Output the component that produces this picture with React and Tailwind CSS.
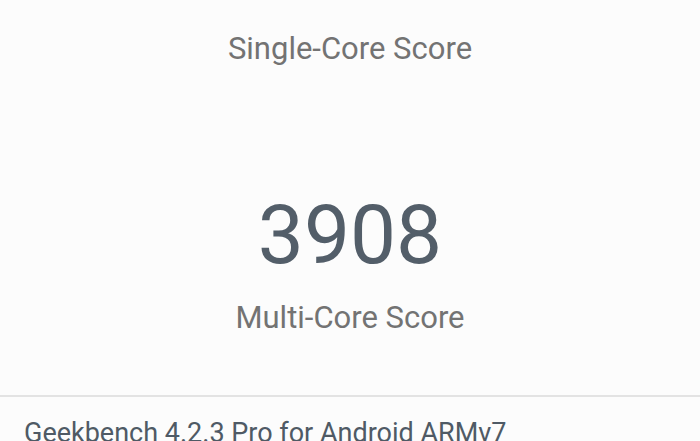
export default function App() {
  return (
    <div className="w-[700px] h-[441px] overflow-hidden bg-[#fcfcfc] flex flex-col" style={{ fontFamily: "Roboto, sans-serif" }}>
      <div className="h-[395px] shrink-0 flex flex-col items-center">
        <div className="mt-[33px] text-[31px] leading-[31px] text-[#737373]">Single-Core Score</div>
        <div className="mt-[130px] text-[82px] leading-[82px] text-[#535e69]">3908</div>
        <div className="mt-[26px] text-[31px] leading-[31px] text-[#737373]">Multi-Core Score</div>
      </div>
      <div className="h-[2px] shrink-0 bg-[#e3e3e3]"></div>
      <div className="pl-[24px] pt-[23px] text-[27px] leading-[27px] text-[#4f5a65] whitespace-nowrap">Geekbench 4.2.3 Pro for Android ARMv7</div>
    </div>
  );
}
